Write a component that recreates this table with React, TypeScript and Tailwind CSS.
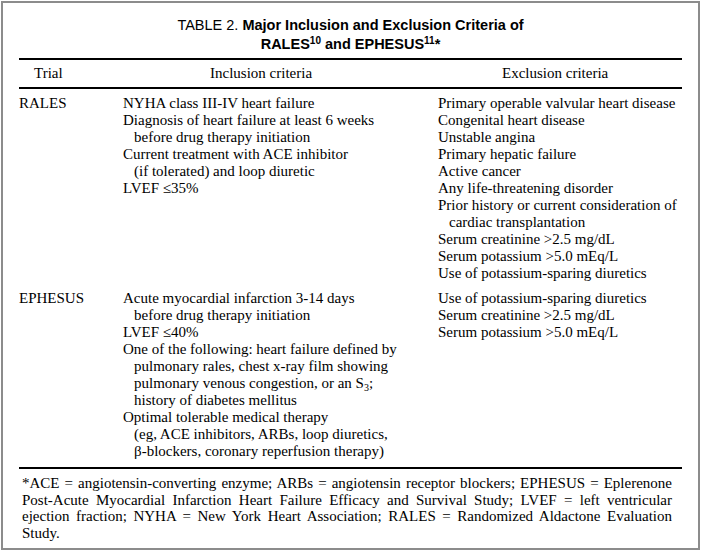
const rales = {
  inclusion: [
    ['NYHA class III-IV heart failure'],
    ['Diagnosis of heart failure at least 6 weeks', 'before drug therapy initiation'],
    ['Current treatment with ACE inhibitor', '(if tolerated) and loop diuretic'],
    ['LVEF \u226435%'],
  ],
  exclusion: [
    ['Primary operable valvular heart disease'],
    ['Congenital heart disease'],
    ['Unstable angina'],
    ['Primary hepatic failure'],
    ['Active cancer'],
    ['Any life-threatening disorder'],
    ['Prior history or current consideration of', 'cardiac transplantation'],
    ['Serum creatinine >2.5 mg/dL'],
    ['Serum potassium >5.0 mEq/L'],
    ['Use of potassium-sparing diuretics'],
  ],
};

const ephesusExclusion = [
  'Use of potassium-sparing diuretics',
  'Serum creatinine >2.5 mg/dL',
  'Serum potassium >5.0 mEq/L',
];

function Item({ lines }: { lines: React.ReactNode[] }) {
  return (
    <div>
      {lines.map((l, i) => (
        <div key={i} className={i > 0 ? 'pl-[11px]' : ''}>
          {l}
        </div>
      ))}
    </div>
  );
}

export default function App() {
  return (
    <div className="w-[701px] h-[551px] bg-white p-px">
      <div
        className="h-full border-2 border-[#8c8c8c] px-[16px] pt-[13px] text-black"
        style={{ fontFamily: '"Liberation Serif", serif' }}
      >
        <div
          className="text-center text-[14.5px] leading-[19px]"
          style={{ fontFamily: '"Liberation Sans", Arial, sans-serif' }}
        >
          <div>
            TABLE 2. <span className="font-bold">Major Inclusion and Exclusion Criteria of</span>
          </div>
          <div className="font-bold">
            RALES<sup className="text-[10px]">10</sup> and EPHESUS<sup className="text-[10px]">11</sup>*
          </div>
        </div>

        <div className="mt-[4px] border-t-2 border-black" />
        <div className="flex text-[15px] leading-[17px] pt-[5px] pb-[5px]">
          <div className="w-[104px] pl-[15px]">Trial</div>
          <div className="w-[315px] pl-[87px]">Inclusion criteria</div>
          <div className="flex-1 pl-[64px]">Exclusion criteria</div>
        </div>
        <div className="border-t-2 border-black" />

        <div className="text-[15px] leading-[17px] pt-[6px]">
          <div className="flex">
            <div className="w-[104px]">RALES</div>
            <div className="w-[315px]">
              {rales.inclusion.map((l, i) => (
                <Item key={i} lines={l} />
              ))}
            </div>
            <div className="flex-1">
              {rales.exclusion.map((l, i) => (
                <Item key={i} lines={l} />
              ))}
            </div>
          </div>

          <div className="flex mt-[8px]">
            <div className="w-[104px]">EPHESUS</div>
            <div className="w-[315px]">
              <Item lines={['Acute myocardial infarction 3-14 days', 'before drug therapy initiation']} />
              <Item lines={['LVEF \u226440%']} />
              <Item
                lines={[
                  'One of the following: heart failure defined by',
                  'pulmonary rales, chest x-ray film showing',
                  <span>
                    pulmonary venous congestion, or an S<sub className="text-[10px]">3</sub>;
                  </span>,
                  'history of diabetes mellitus',
                ]}
              />
              <Item
                lines={[
                  'Optimal tolerable medical therapy',
                  '(eg, ACE inhibitors, ARBs, loop diuretics,',
                  '\u03b2-blockers, coronary reperfusion therapy)',
                ]}
              />
            </div>
            <div className="flex-1">
              {ephesusExclusion.map((t) => (
                <div key={t}>{t}</div>
              ))}
            </div>
          </div>
        </div>

        <div className="mt-[7px] border-t-2 border-black" />
        <p className="pt-[6px] pl-[3px] pr-[10px] text-[15px] leading-[16.5px] text-justify">
          *ACE = angiotensin-converting enzyme; ARBs = angiotensin receptor blockers; EPHESUS = Eplerenone
          Post-Acute Myocardial Infarction Heart Failure Efficacy and Survival Study; LVEF = left ventricular
          ejection fraction; NYHA = New York Heart Association; RALES = Randomized Aldactone Evaluation
          Study.
        </p>
      </div>
    </div>
  );
}
